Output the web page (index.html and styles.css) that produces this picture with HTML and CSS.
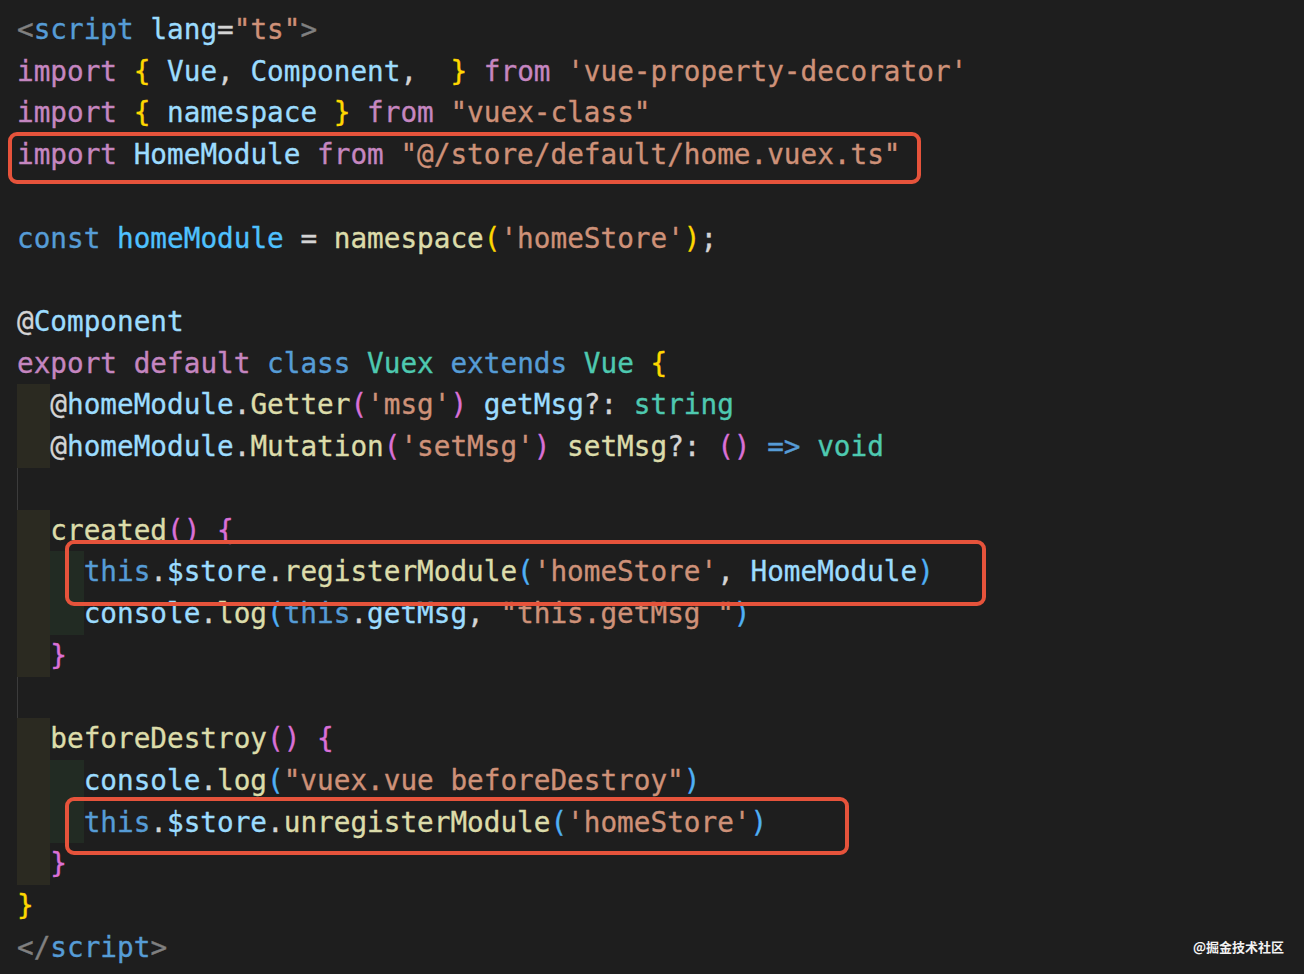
FILE: index.html
```html
<!DOCTYPE html>
<html lang="zh-CN">
<head>
  <meta charset="UTF-8" />
  <meta name="viewport" content="width=device-width, initial-scale=1.0"/>
  <link rel="stylesheet" href="styles.css">
</head>
<body>

  <div class="editor">
    <div class="ln"><span class="t"><span class="tg">&lt;</span><span class="bl">script</span> <span class="vr">lang</span><span class="pu">=</span><span class="st">"ts"</span><span class="tg">&gt;</span></span></div>
    <div class="ln"><span class="t"><span class="kw">import</span> <span class="b1">{</span> <span class="vr">Vue</span><span class="pu">,</span> <span class="vr">Component</span><span class="pu">,</span>  <span class="b1">}</span> <span class="kw">from</span> <span class="st">'vue-property-decorator'</span></span></div>
    <div class="ln"><span class="t"><span class="kw">import</span> <span class="b1">{</span> <span class="vr">namespace</span> <span class="b1">}</span> <span class="kw">from</span> <span class="st">"vuex-class"</span></span></div>
    <div class="ln"><span class="t"><span class="kw">import</span> <span class="vr">HomeModule</span> <span class="kw">from</span> <span class="st">"@/store/default/home.vuex.ts"</span></span></div>
    <div class="ln"></div>
    <div class="ln"><span class="t"><span class="bl">const</span> <span class="cn">homeModule</span> <span class="pu">=</span> <span class="fn">namespace</span><span class="b1">(</span><span class="st">'homeStore'</span><span class="b1">)</span><span class="pu">;</span></span></div>
    <div class="ln"></div>
    <div class="ln"><span class="t"><span class="pu">@</span><span class="vr">Component</span></span></div>
    <div class="ln"><span class="t"><span class="kw">export</span> <span class="kw">default</span> <span class="bl">class</span> <span class="ty">Vuex</span> <span class="bl">extends</span> <span class="ty">Vue</span> <span class="b1">{</span></span></div>
    <div class="ln"><span class="ind i1"></span><span class="t"><span class="pu">@</span><span class="vr">homeModule</span><span class="pu">.</span><span class="fn">Getter</span><span class="b2">(</span><span class="st">'msg'</span><span class="b2">)</span> <span class="vr">getMsg</span><span class="pu">?:</span> <span class="ty">string</span></span></div>
    <div class="ln"><span class="ind i1"></span><span class="t"><span class="pu">@</span><span class="vr">homeModule</span><span class="pu">.</span><span class="fn">Mutation</span><span class="b2">(</span><span class="st">'setMsg'</span><span class="b2">)</span> <span class="fn">setMsg</span><span class="pu">?:</span> <span class="b2">()</span> <span class="bl">=&gt;</span> <span class="ty">void</span></span></div>
    <div class="ln"><span class="ind guide"></span></div>
    <div class="ln"><span class="ind i1"></span><span class="t"><span class="fn">created</span><span class="b2">()</span> <span class="b2">{</span></span></div>
    <div class="ln"><span class="ind i1"></span><span class="ind i2"></span><span class="t"><span class="bl">this</span><span class="pu">.</span><span class="vr">$store</span><span class="pu">.</span><span class="fn">registerModule</span><span class="b3">(</span><span class="st">'homeStore'</span><span class="pu">,</span> <span class="vr">HomeModule</span><span class="b3">)</span></span></div>
    <div class="ln"><span class="ind i1"></span><span class="ind i2"></span><span class="t"><span class="vr">console</span><span class="pu">.</span><span class="fn">log</span><span class="b3">(</span><span class="bl">this</span><span class="pu">.</span><span class="vr">getMsg</span><span class="pu">,</span> <span class="st">"this.getMsg "</span><span class="b3">)</span></span></div>
    <div class="ln"><span class="ind i1"></span><span class="t"><span class="b2">}</span></span></div>
    <div class="ln"><span class="ind guide"></span></div>
    <div class="ln"><span class="ind i1"></span><span class="t"><span class="fn">beforeDestroy</span><span class="b2">()</span> <span class="b2">{</span></span></div>
    <div class="ln"><span class="ind i1"></span><span class="ind i2"></span><span class="t"><span class="vr">console</span><span class="pu">.</span><span class="fn">log</span><span class="b3">(</span><span class="st">"vuex.vue beforeDestroy"</span><span class="b3">)</span></span></div>
    <div class="ln"><span class="ind i1"></span><span class="ind i2"></span><span class="t"><span class="bl">this</span><span class="pu">.</span><span class="vr">$store</span><span class="pu">.</span><span class="fn">unregisterModule</span><span class="b3">(</span><span class="st">'homeStore'</span><span class="b3">)</span></span></div>
    <div class="ln"><span class="ind i1"></span><span class="t"><span class="b2">}</span></span></div>
    <div class="ln"><span class="t"><span class="b1">}</span></span></div>
    <div class="ln"><span class="t"><span class="tg">&lt;/</span><span class="bl">script</span><span class="tg">&gt;</span></span></div>

    <div class="mark mark-1"></div>
    <div class="mark mark-2"></div>
    <div class="mark mark-3"></div>
  </div>

  <div class="watermark">@掘金技术社区</div>

</body>
</html>
```

FILE: styles.css
```css
* {
  margin: 0;
  padding: 0;
  box-sizing: border-box;
}

html, body {
  width: 100%;
  height: 100%;
  overflow: hidden;
  background: #1e1e1e;
}

.editor {
  position: relative;
  height: 100%;
  padding: 9px 0 0 17px;
  font-family: "DejaVu Sans Mono", "Liberation Mono", monospace;
  font-size: 27.7px;
  -webkit-text-stroke: 0.35px currentColor;
}

.ln {
  display: flex;
  height: 41.73px;
  line-height: 41.73px;
  white-space: pre;
  color: #d4d4d4;
}

.ind {
  width: 2ch;
  flex-shrink: 0;
}

.i1 {
  background: #2b2a21;
}

.i2 {
  background: #222b23;
}

.guide {
  border-left: 1px solid #3c3c3c;
}

/* syntax colours */
.kw { color: #c586c0; }
.st { color: #ce9178; }
.vr { color: #9cdcfe; }
.cn { color: #4fc1ff; }
.bl { color: #569cd6; }
.ty { color: #4ec9b0; }
.fn { color: #dcdcaa; }
.pu { color: #d4d4d4; }
.tg { color: #808080; }
.b1 { color: #ffd700; }
.b2 { color: #da70d6; }
.b3 { color: #4fb0f5; }

/* red annotation boxes */
.mark {
  position: absolute;
  border: 4px solid #e6533b;
  border-radius: 9px;
}

.mark-1 {
  left: 8px;
  top: 132px;
  width: 913px;
  height: 52px;
}

.mark-2 {
  left: 65px;
  top: 540px;
  width: 921px;
  height: 66px;
}

.mark-3 {
  left: 65px;
  top: 797px;
  width: 784px;
  height: 58px;
}

.watermark {
  position: absolute;
  right: 20px;
  bottom: 18px;
  font-family: "Noto Sans CJK SC", sans-serif;
  font-size: 13px;
  font-weight: bold;
  color: #f2f2f2;
}
```
